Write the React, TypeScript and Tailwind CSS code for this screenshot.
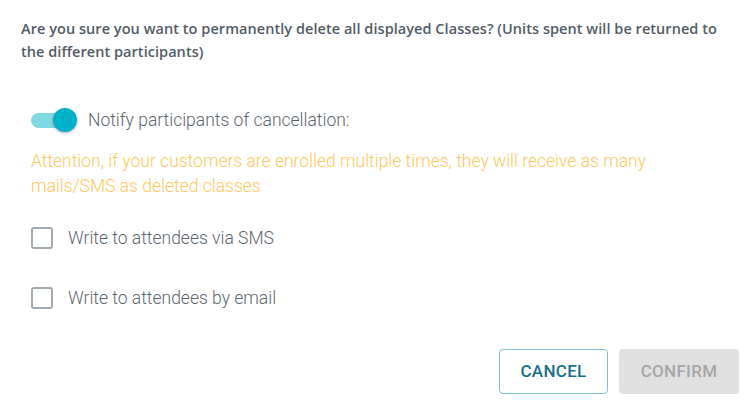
import { useState } from 'react';

export default function App() {
  const [notify, setNotify] = useState(true);
  const [sms, setSms] = useState(false);
  const [email, setEmail] = useState(false);

  return (
    <div className="w-[746px] h-[405px] bg-white overflow-hidden flex flex-col font-['Roboto',sans-serif]">
      <p className="pl-[21px] pr-6 pt-[17px] text-[14.5px] leading-[23px] font-semibold text-[#525c66] font-['Open_Sans',sans-serif] tracking-[0.05px]">
        Are you sure you want to permanently delete all displayed Classes? (Units spent will be returned to
        <br />
        the different participants)
      </p>

      <div className="mt-[44px] pl-[31px] flex items-center gap-[11px]">
        <button
          onClick={() => setNotify(!notify)}
          className="relative w-[46px] h-[24px] flex items-center"
        >
          <span className={`absolute left-0 w-[44px] h-[15px] rounded-full ${notify ? 'bg-[#80d8e3]' : 'bg-gray-300'}`} />
          <span
            className={`absolute w-[24px] h-[24px] rounded-full shadow-[0_1px_3px_rgba(0,0,0,0.3)] ${notify ? 'left-[22px] bg-[#00b2c9]' : 'left-0 bg-white'}`}
          />
        </button>
        <span className="text-[17.5px] font-light text-[#5d666f]">Notify participants of cancellation:</span>
      </div>

      <p className="mt-[16px] pl-[31px] pr-6 text-[17.5px] leading-[25px] font-light text-[#fec760]">
        Attention, if your customers are enrolled multiple times, they will receive as many
        <br />
        mails/SMS as deleted classes
      </p>

      <div className="mt-[26px] pl-[31px] flex flex-col gap-[33px]">
        <label className="flex items-center gap-[15px] cursor-pointer">
          <input type="checkbox" checked={sms} onChange={() => setSms(!sms)} className="hidden" />
          <span className="w-[22px] h-[22px] rounded-[3px] border-2 border-[#a3abb2]" />
          <span className="text-[17.5px] font-light text-[#5d666f]">Write to attendees via SMS</span>
        </label>
        <label className="flex items-center gap-[15px] cursor-pointer">
          <input type="checkbox" checked={email} onChange={() => setEmail(!email)} className="hidden" />
          <span className="w-[22px] h-[22px] rounded-[3px] border-2 border-[#a3abb2]" />
          <span className="text-[17.5px] font-light text-[#5d666f]">Write to attendees by email</span>
        </label>
      </div>

      <div className="mt-auto mb-[11px] pr-[7px] flex justify-end gap-[11px]">
        <button className="w-[109px] h-[45px] rounded-[4px] border border-[#7fbfcf] text-[#19708a] text-[17px] font-medium tracking-[0.3px]">
          CANCEL
        </button>
        <button disabled className="w-[120px] h-[45px] rounded-[4px] bg-[#e0e0e0] text-[#a6a6a6] text-[17px] font-medium tracking-[0.3px]">
          CONFIRM
        </button>
      </div>
    </div>
  );
}
